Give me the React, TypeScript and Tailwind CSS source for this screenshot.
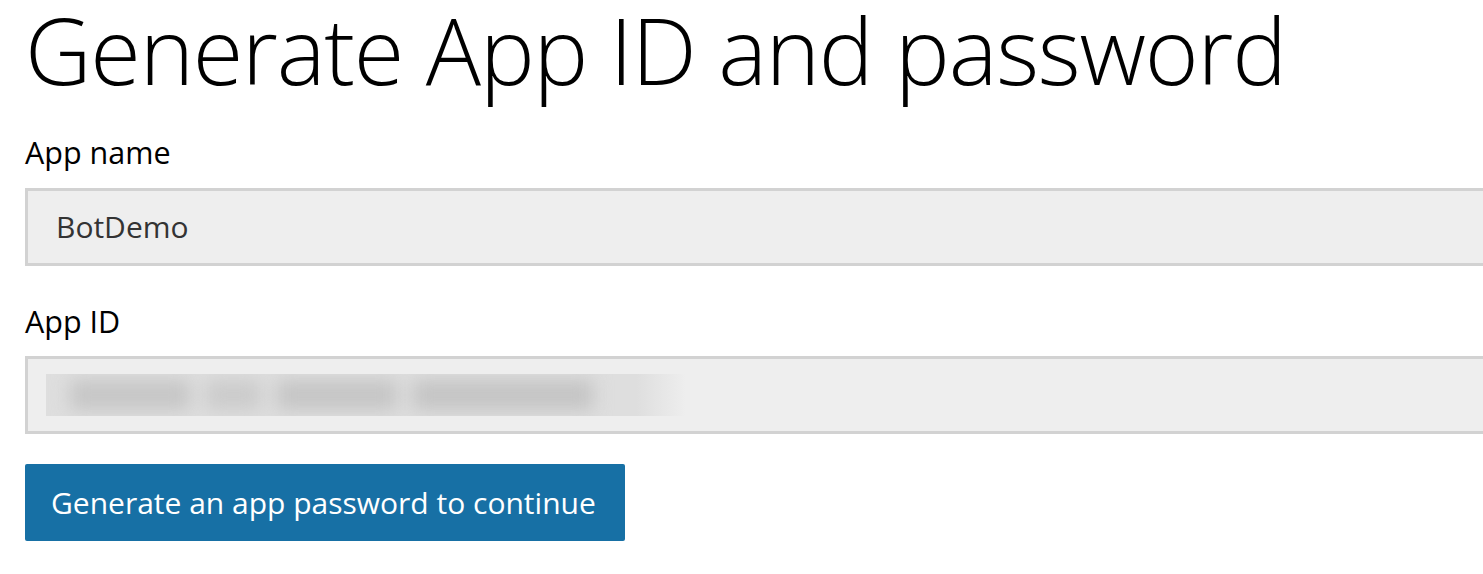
import React from 'react';

function Field({ label, children, top }: { label: string; children: React.ReactNode; top: string }) {
  return (
    <div className={top}>
      <div className="text-[30.5px] leading-none text-black">{label}</div>
      <div className="mt-[20px] -mr-[20px] flex h-[78px] items-center border-[3px] border-[#d2d2d2] bg-[#eeeeee]">
        {children}
      </div>
    </div>
  );
}

export default function App() {
  return (
    <div className="h-[574px] w-full overflow-hidden bg-white pl-[25px] font-['Open_Sans','Noto_Sans',sans-serif]">
      <h1 className="whitespace-nowrap text-[92px] font-light leading-[1.08] tracking-[-1.2px] text-black">
        Generate App ID and password
      </h1>
      <Field label="App name" top="mt-[38px]">
        <span className="pl-[28px] text-[30px] leading-none text-[#333333]">BotDemo</span>
      </Field>
      <Field label="App ID" top="mt-[40px]">
        <div className="relative ml-[18px] h-[42px] w-[640px] overflow-hidden bg-[#dedede]">
          <div className="absolute inset-0 flex items-center gap-[16px] pl-[24px] blur-[9px]">
            <div className="h-[30px] w-[120px] bg-[#c6c6c6]" />
            <div className="h-[30px] w-[55px] bg-[#cbcbcb]" />
            <div className="h-[30px] w-[120px] bg-[#c5c5c5]" />
            <div className="h-[30px] w-[180px] bg-[#c4c4c4]" />
          </div>
          <div className="absolute inset-y-0 right-0 w-[50px] bg-gradient-to-r from-transparent to-[#eeeeee]" />
        </div>
      </Field>
      <button className="mt-[30px] flex h-[77px] w-[600px] items-center rounded-[2px] bg-[#1770a5] pl-[26px] text-[30px] leading-none text-white">
        Generate an app password to continue
      </button>
    </div>
  );
}
